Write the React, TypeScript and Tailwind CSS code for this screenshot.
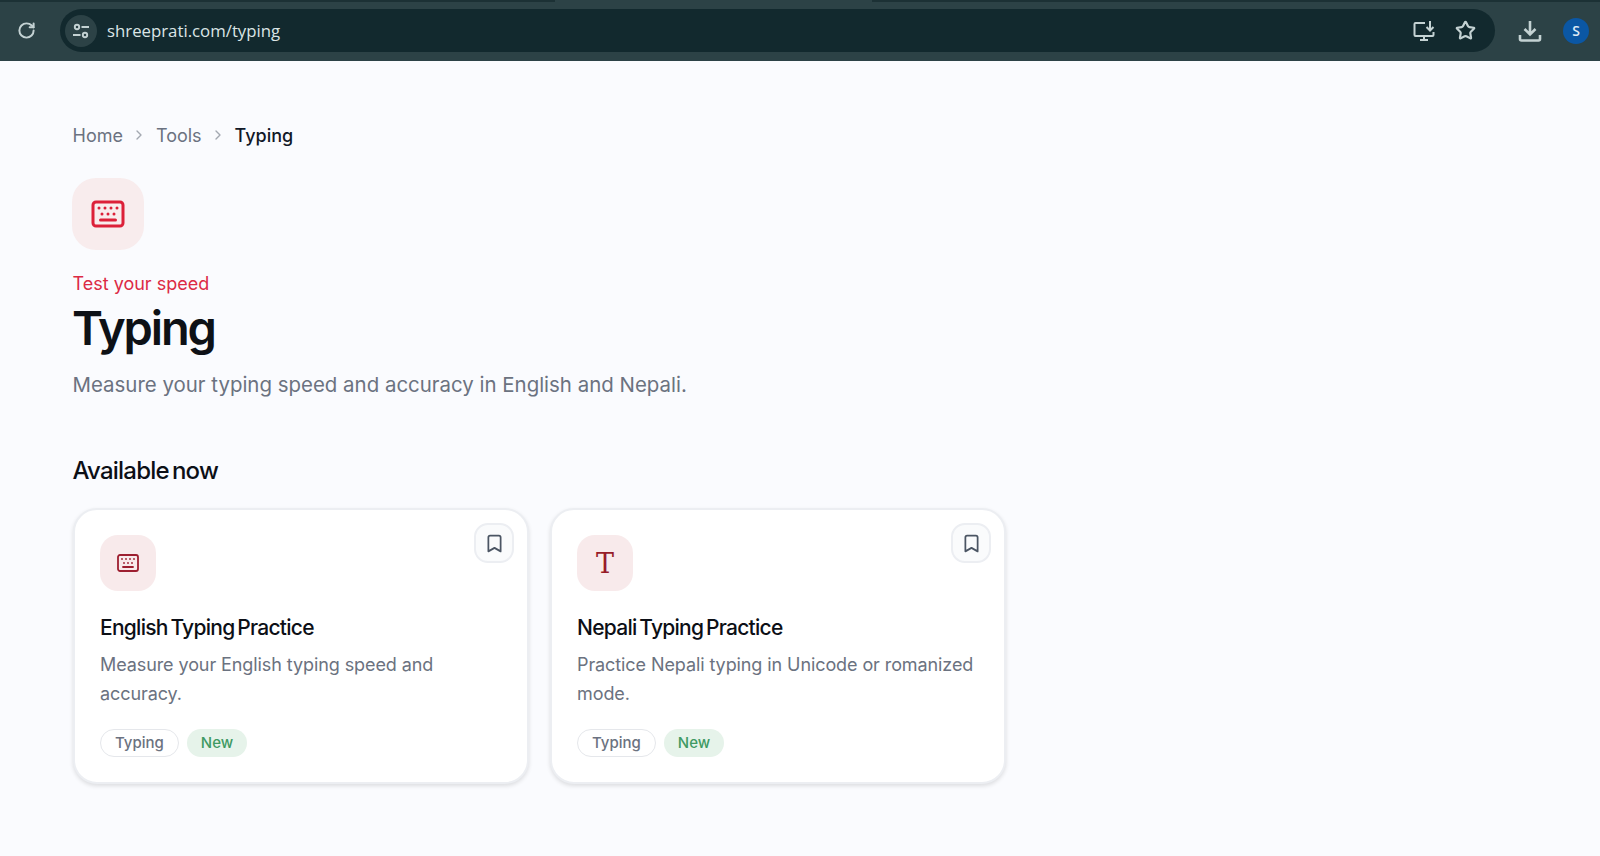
import { Bookmark, ChevronRight, Keyboard, RotateCw, Star } from 'lucide-react';

const cards = [
  { title: 'English Typing Practice', desc: 'Measure your English typing speed and accuracy.', icon: 'keyboard' },
  { title: 'Nepali Typing Practice', desc: 'Practice Nepali typing in Unicode or romanized mode.', icon: 'type' },
];

function BrowserBar() {
  return (
    <div className="flex h-[61px] flex-col bg-[#2c4246] font-['Open_Sans',sans-serif] text-[#c4d2d3]">
      <div className="flex h-[2px] shrink-0">
        <div className="w-[555px] bg-[#1c3135]" />
        <div className="w-[317px]" />
        <div className="flex-1 bg-[#1c3135]" />
      </div>
      <div className="flex flex-1 items-center pb-[2px]">
        <div className="flex w-[60px] shrink-0 justify-center pr-[7px]">
          <RotateCw className="h-[19px] w-[19px]" strokeWidth={2.5} />
        </div>
        <div className="flex h-[43px] flex-1 items-center rounded-full bg-[#12292e] pl-[5px] pr-[19px]">
          <div className="flex h-8 w-8 items-center justify-center rounded-full bg-[#2c4246]">
            <svg width="18" height="18" viewBox="0 0 18 18" fill="none" stroke="currentColor" strokeWidth="1.9">
              <circle cx="5" cy="5" r="2.2" />
              <path d="M9.500 5H17M1 13h7.500" />
              <circle cx="13" cy="13" r="2.2" />
            </svg>
          </div>
          <span className="ml-[10px] text-[16.8px] text-[#dbe5e6]">shreeprati.com/typing</span>
          <div className="ml-auto flex items-center gap-[19px]">
            <svg width="23" height="22" viewBox="0 0 23 22" fill="none" stroke="currentColor" strokeWidth="2">
              <path d="M12 3H2.500a1 1 0 0 0-1 1v11a1 1 0 0 0 1 1h17a1 1 0 0 0 1-1v-3M7 20h8M11 16v4" />
              <path d="M17 1v9M13.500 7l3.500 3.500L20.500 7" />
            </svg>
            <Star className="h-[21px] w-[21px]" strokeWidth={2.5} />
          </div>
        </div>
        <div className="flex w-[105px] shrink-0 items-center pl-[23px]">
          <svg width="24" height="24" viewBox="0 0 24 24" fill="none" stroke="currentColor" strokeWidth="2.600">
            <path d="M12 2v13M6.500 10l5.500 5.500L17.500 10M2 16v4a1.500 1.500 0 0 0 1.500 1.500h17A1.500 1.500 0 0 0 22 20v-4" />
          </svg>
          <div className="ml-[21px] flex h-[26px] w-[26px] items-center justify-center rounded-full bg-[#0b57a4] text-[14px] font-semibold text-[#dfeaf5]">
            S
          </div>
        </div>
      </div>
    </div>
  );
}

function Card({ title, desc, icon }: { title: string; desc: string; icon: string }) {
  return (
    <div className="flex h-[276px] w-[456px] flex-col rounded-[24px] border-2 border-[#eceef2] bg-white pl-[25px] pr-[13px] pt-[13px] shadow-[0_2px_4px_rgba(0,0,0,0.12)]">
      <div className="flex items-start justify-between">
        <div className="mt-3 flex h-14 w-14 items-center justify-center rounded-[18px] bg-[#f8eaeb] text-[#9d1f30]">
          {icon === 'keyboard' ? (
            <Keyboard className="h-6 w-6" strokeWidth={1.8} />
          ) : (
            <span className="font-['DejaVu_Serif',serif] text-[27px] leading-none text-[#971c28]">T</span>
          )}
        </div>
        <button className="flex h-10 w-10 items-center justify-center rounded-[14px] border-2 border-[#eceef2] bg-[#fafbfc] text-[#4b5563]">
          <Bookmark className="h-[21px] w-[21px]" strokeWidth={2} />
        </button>
      </div>
      <h3 className="mt-[22px] text-[21px] font-medium leading-[30px] tracking-[-0.035em] [word-spacing:-0.1em] text-[#0c0f16]">{title}</h3>
      <p className="mt-[7px] w-[410px] text-[18px] leading-[29px] tracking-[-0.005em] text-[#6b7280]">{desc}</p>
      <div className="mt-[21px] flex gap-2">
        <span className="flex h-7 items-center rounded-full border border-[#e5e7eb] bg-white px-[14px] text-[15px] font-medium text-[#6b7280]">
          Typing
        </span>
        <span className="flex h-7 items-center rounded-full bg-[#e6f3ea] px-[14px] text-[15px] font-medium text-[#3f9a63]">
          New
        </span>
      </div>
    </div>
  );
}

export default function App() {
  return (
    <div className="h-[856px] overflow-hidden bg-[#fafbfe] font-['Inter',sans-serif]">
      <BrowserBar />
      <main className="px-[72px]">
        <nav className="mt-[62px] ml-[0.5px] flex h-6 items-center text-[18px] text-[#6b7280]">
          <span>Home</span>
          <ChevronRight className="mx-[8.5px] h-4 w-4 text-[#a3a8b1]" />
          <span>Tools</span>
          <ChevronRight className="mx-[8.5px] h-4 w-4 text-[#a3a8b1]" />
          <span className="font-medium text-[#111827]">Typing</span>
        </nav>
        <div className="mt-[31px] flex h-[72px] w-[72px] items-center justify-center rounded-[24px] bg-[#f8eced] text-[#dc2039]">
          <Keyboard className="h-9 w-9" strokeWidth={2} />
        </div>
        <p className="mt-[22px] ml-[0.5px] text-[18px] leading-6 text-[#dc2a45]">Test your speed</p>
        <h1 className="mt-[4px] text-[47px] font-semibold leading-[56px] tracking-[-0.045em] text-[#0e1116]">Typing</h1>
        <p className="mt-[15px] ml-[0.5px] text-[20.45px] leading-7 text-[#6b7280]">Measure your typing speed and accuracy in English and Nepali.</p>
        <h2 className="mt-[56px] ml-[0.5px] text-[24px] font-medium leading-8 tracking-[-0.033em] [word-spacing:-0.1em] text-[#0c0f16]">Available now</h2>
        <div className="mt-[21px] ml-[1px] flex gap-[21px]">
          {cards.map((c) => (
            <Card key={c.title} {...c} />
          ))}
        </div>
      </main>
    </div>
  );
}
